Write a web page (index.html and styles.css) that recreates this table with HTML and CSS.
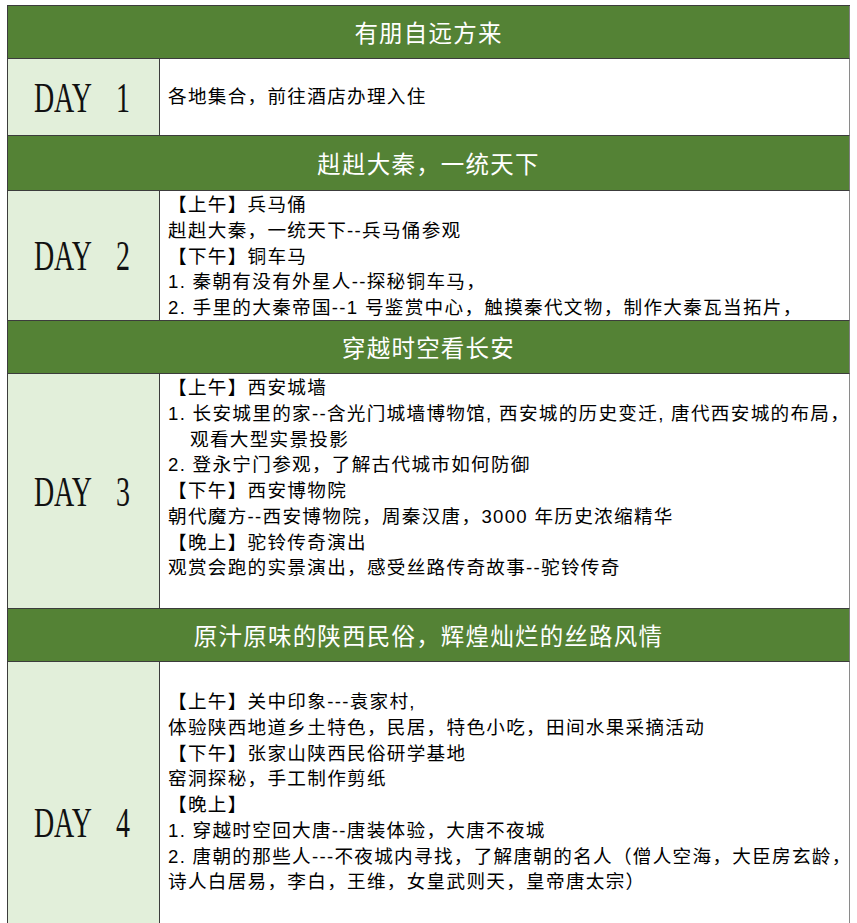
FILE: index.html
```html
<!DOCTYPE html>
<html lang="zh-CN">
<head>
<meta charset="utf-8">
<title>行程</title>
<link rel="stylesheet" href="styles.css">
</head>
<body>
<div class="sheet">
  <div class="head h1">有朋自远方来</div>
  <div class="day d1"><span class="day-label">DAY 1</span></div>
  <div class="plan d1 mid"><div class="ln">各地集合，前往酒店办理入住</div></div>

  <div class="head h2">赳赳大秦，一统天下</div>
  <div class="day d2"><span class="day-label">DAY 2</span></div>
  <div class="plan d2 top">
    <div class="ln">【上午】兵马俑</div>
    <div class="ln">赳赳大秦，一统天下--兵马俑参观</div>
    <div class="ln">【下午】铜车马</div>
    <div class="ln">1. 秦朝有没有外星人--探秘铜车马，</div>
    <div class="ln">2. 手里的大秦帝国--1 号鉴赏中心，触摸秦代文物，制作大秦瓦当拓片，</div>
  </div>

  <div class="head h3">穿越时空看长安</div>
  <div class="day d3"><span class="day-label">DAY 3</span></div>
  <div class="plan d3 top">
    <div class="ln">【上午】西安城墙</div>
    <div class="ln">1. 长安城里的家--含光门城墙博物馆, 西安城的历史变迁, 唐代西安城的布局，</div>
    <div class="ln indent">观看大型实景投影</div>
    <div class="ln">2. 登永宁门参观，了解古代城市如何防御</div>
    <div class="ln">【下午】西安博物院</div>
    <div class="ln">朝代魔方--西安博物院，周秦汉唐，3000 年历史浓缩精华</div>
    <div class="ln">【晚上】驼铃传奇演出</div>
    <div class="ln">观赏会跑的实景演出，感受丝路传奇故事--驼铃传奇</div>
  </div>

  <div class="head h4">原汁原味的陕西民俗，辉煌灿烂的丝路风情</div>
  <div class="day d4"><span class="day-label">DAY 4</span></div>
  <div class="plan d4 top gap">
    <div class="ln">【上午】关中印象---袁家村,</div>
    <div class="ln">体验陕西地道乡土特色，民居，特色小吃，田间水果采摘活动</div>
    <div class="ln">【下午】张家山陕西民俗研学基地</div>
    <div class="ln">窑洞探秘，手工制作剪纸</div>
    <div class="ln">【晚上】</div>
    <div class="ln">1. 穿越时空回大唐--唐装体验，大唐不夜城</div>
    <div class="ln">2. 唐朝的那些人---不夜城内寻找，了解唐朝的名人（僧人空海，大臣房玄龄，</div>
    <div class="ln">诗人白居易，李白，王维，女皇武则天，皇帝唐太宗）</div>
  </div>
</div>
</body>
</html>
```

FILE: styles.css
```css
html, body {
  margin: 0;
  padding: 0;
  background: #ffffff;
}

body {
  padding: 5px 0 0 7px;
  font-family: "Liberation Sans", "Noto Sans CJK SC", sans-serif;
}

.sheet {
  display: grid;
  grid-template-columns: 152px 690px;
  width: 843px;
  box-sizing: border-box;
  border-top: 1px solid #3c3c3c;
  border-left: 1px solid #3c3c3c;
}

.head,
.day,
.plan {
  box-sizing: border-box;
  border-bottom: 1px solid #3c3c3c;
}

.head {
  grid-column: 1 / -1;
  display: flex;
  align-items: center;
  justify-content: center;
  background: #548235;
  color: #ffffff;
  font-family: "Noto Sans CJK SC", sans-serif;
  font-size: 23.5px;
  letter-spacing: 1.2px;
  border-right: 1px solid #7f7f7f;
}

.h1 { height: 53px; }
.h2 { height: 55px; }
.h3 { height: 53px; }
.h4 { height: 53px; }

.d1 { height: 77px; }
.d2 { height: 130px; }
.d3 { height: 235px; }
.d4 { height: 322px; }

.day {
  display: flex;
  align-items: center;
  justify-content: center;
  background: #e2efda;
  border-right: 1px solid #3c3c3c;
  overflow: hidden;
}

.day-label {
  display: inline-block;
  font-family: "Liberation Serif", serif;
  font-size: 43px;
  line-height: 1;
  color: #111111;
  word-spacing: 28px;
  transform: scaleX(0.65);
  white-space: nowrap;
  margin-right: 4px;
}

.plan {
  display: flex;
  flex-direction: column;
  padding-left: 8px;
  border-right: 1px solid #8a8a8a;
  background: #ffffff;
  color: #000000;
  font-size: 18.6px;
  letter-spacing: 1.3px;
  line-height: 25.75px;
}

.plan.mid { justify-content: center; }
.plan.top { justify-content: flex-start; padding-top: 1px; }
.plan.gap { padding-top: 27px; }

.ln { white-space: nowrap; }
.ln.indent { padding-left: 22px; }
```
